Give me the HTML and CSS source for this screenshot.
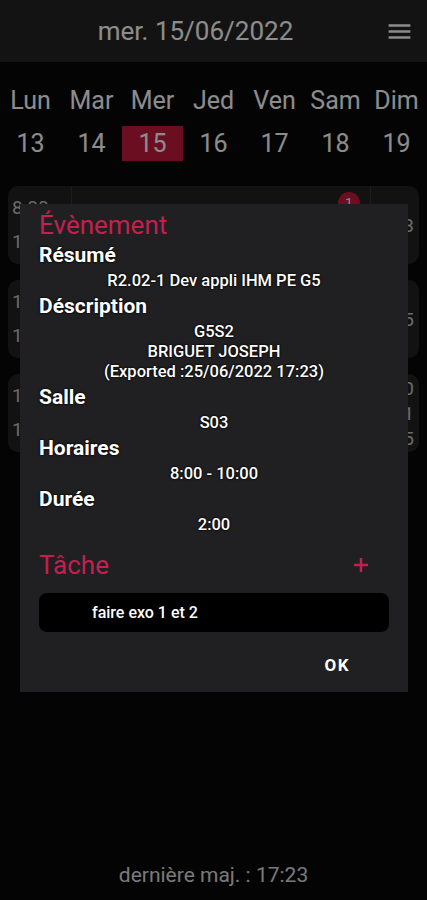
FILE: index.html
```html
<!DOCTYPE html>
<html lang="fr">
<head>
    <meta charset="UTF-8">
    <meta name="viewport" content="width=device-width, initial-scale=1.0">
    <title>Emploi du temps</title>
    <link rel="stylesheet" href="styles.css">
</head>
<body>
    <div class="app">
        <header class="topbar">
            <div class="date-title">mer. 15/06/2022</div>
            <svg class="menu" viewBox="0 0 24 24"><path d="M3 18h18v-2H3v2zm0-5h18v-2H3v2zm0-7v2h18V6H3z"/></svg>
        </header>

        <div class="week">
            <div class="day-name">Lun</div>
            <div class="day-name">Mar</div>
            <div class="day-name">Mer</div>
            <div class="day-name">Jed</div>
            <div class="day-name">Ven</div>
            <div class="day-name">Sam</div>
            <div class="day-name">Dim</div>
            <div class="day-num">13</div>
            <div class="day-num">14</div>
            <div class="day-num selected">15</div>
            <div class="day-num">16</div>
            <div class="day-num">17</div>
            <div class="day-num">18</div>
            <div class="day-num">19</div>
        </div>

        <div class="events">
            <div class="event">
                <div class="ev-time"><span>8:00</span><span>10:00</span></div>
                <div class="ev-title">R2.02-1 Dev appli IHM PE G5<span class="badge">1</span></div>
                <div class="ev-room"><span>S03</span></div>
            </div>
            <div class="event">
                <div class="ev-time"><span>10:15</span><span>12:15</span></div>
                <div class="ev-title">R2.05 Services réseaux</div>
                <div class="ev-room"><span>S25</span></div>
            </div>
            <div class="event">
                <div class="ev-time"><span>13:30</span><span>15:30</span></div>
                <div class="ev-title">R2.10 Gestion de projet</div>
                <div class="ev-room"><span>S10</span><span>S11</span><span>S15</span></div>
            </div>
        </div>

        <footer class="updated">dernière maj. : 17:23</footer>
    </div>

    <div class="scrim"></div>

    <div class="dialog">
        <div class="dlg-title">Évènement</div>

        <div class="field-label">Résumé</div>
        <div class="field-value">R2.02-1 Dev appli IHM PE G5</div>

        <div class="field-label">Déscription</div>
        <div class="field-value">G5S2<br>BRIGUET JOSEPH<br>(Exported :25/06/2022 17:23)</div>

        <div class="field-label">Salle</div>
        <div class="field-value">S03</div>

        <div class="field-label">Horaires</div>
        <div class="field-value">8:00 - 10:00</div>

        <div class="field-label">Durée</div>
        <div class="field-value">2:00</div>

        <div class="task-head">
            <span class="dlg-title">Tâche</span>
            <svg class="add" viewBox="0 0 16 16"><path d="M8 1v14M1 8h14"/></svg>
        </div>
        <div class="task">faire exo 1 et 2</div>

        <div class="actions"><span class="btn-ok">OK</span></div>
    </div>
</body>
</html>
```

FILE: styles.css
```css
body { margin: 0; background: #090909; color: #fff; font-family: Roboto, "Noto Sans", sans-serif; }
.app { min-height: 100vh; display: flex; flex-direction: column; }

.topbar { height: 62px; background: #242424; display: flex; align-items: center; padding-left: 6px; }
.date-title { flex: 1; text-align: center; font-size: 26px; color: #fff; }
.menu { width: 29px; height: 29px; fill: #fff; margin-right: 13px; }

.week { display: grid; grid-template-columns: repeat(7, 1fr); row-gap: 10px; padding-top: 24px; color: #fff; font-size: 25px; text-align: center; }
.day-name { line-height: 30px; }
.day-num { line-height: 35px; }
.day-num.selected { background: #c31a3e; }

.events { display: flex; flex-direction: column; gap: 16px; padding: 0 8px; margin-top: 25px; }
.event { display: grid; grid-template-columns: 64px 1fr 48px; height: 78px; background: #212121; border-radius: 10px; color: #c4c4c4; font-size: 19px; }
.ev-time { display: flex; flex-direction: column; justify-content: space-between; padding: 10px 0 10px 4px; line-height: 24px; border-right: 1px solid #333; }
.ev-title { position: relative; display: flex; align-items: center; justify-content: center; border-right: 1px solid #333; font-size: 17px; }
.badge { position: absolute; top: 6px; right: 10px; width: 22px; height: 22px; border-radius: 50%; background: #c31a3e; color: #fff; font-size: 13px; line-height: 22px; text-align: center; }
.ev-room { display: flex; flex-direction: column; justify-content: center; align-items: flex-end; padding-right: 5px; line-height: 25px; }

.updated { margin-top: auto; text-align: center; font-size: 21px; line-height: 30px; color: #ddd; padding-bottom: 10px; }

.scrim { position: fixed; inset: 0; background: rgba(0, 0, 0, 0.45); }

.dialog { position: fixed; top: 204px; left: 20px; width: 388px; box-sizing: border-box; padding: 7px 19px 0; background: #202022; }
.dlg-title { display: block; color: #c51f4f; font-size: 26px; line-height: 28px; margin-bottom: 3px; }
.field-label { font-weight: bold; font-size: 21px; line-height: 26px; text-shadow: 0 0 2px #000, 0 0 2px #000; }
.field-value { text-align: center; font-weight: 500; font-size: 16.5px; line-height: 20px; padding: 3px 0 2px; text-shadow: 0 0 2px #000, 0 0 2px #000; }

.task-head { display: flex; justify-content: space-between; align-items: center; margin-top: 14px; padding-right: 20px; }
.task-head .dlg-title { margin-bottom: 0; }
.add { width: 16px; height: 16px; stroke: #c51f4f; stroke-width: 2.5; fill: none; }
.task { margin-top: 14px; height: 39px; line-height: 39px; background: #000; border-radius: 8px; padding-left: 53px; font-size: 16px; font-weight: 500; }

.actions { display: flex; justify-content: flex-end; padding: 23px 39px 17px 0; }
.btn-ok { font-size: 17px; font-weight: bold; line-height: 20px; letter-spacing: 1.5px; }
```
